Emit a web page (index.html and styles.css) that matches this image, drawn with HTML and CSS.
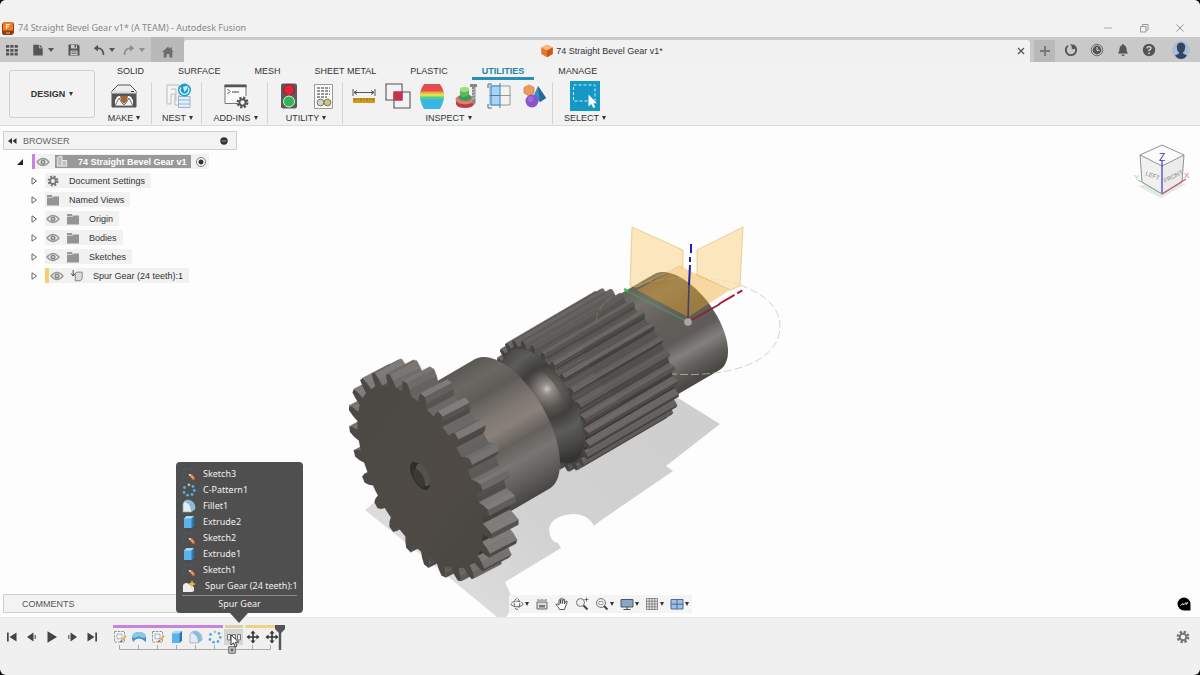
FILE: index.html
```html
<!DOCTYPE html>
<html lang="en">
<head>
<meta charset="utf-8">
<title>74 Straight Bevel Gear v1* (A TEAM) - Autodesk Fusion</title>
<link rel="stylesheet" href="styles.css">
</head>
<body>
<svg class="defs" width="0" height="0" aria-hidden="true">
  <symbol id="eye" viewBox="0 0 14 10"><path d="M1 5Q7-2 13 5Q7 12 1 5Z" fill="none" stroke="#9a9a9a" stroke-width="1.4"/><circle cx="7" cy="5" r="2.6" fill="#8c8c8c"/><circle cx="7" cy="5" r=".9" fill="#ddd"/></symbol>
  <symbol id="folder" viewBox="0 0 14 12"><path d="M1 1H6V2.400H13V11.500H1Z" fill="#949494"/><path d="M1 3.400H6.500L7.500 2.600" stroke="#e4e4e4" fill="none" stroke-width=".8"/></symbol>
  <symbol id="tri" viewBox="0 0 8 8"><path d="M2 .8L6.500 4L2 7.200Z" fill="#fff" stroke="#555" stroke-width=".9"/></symbol>
  <symbol id="cog" viewBox="0 0 14 14"><circle cx="7" cy="7" r="5" fill="none" stroke="currentColor" stroke-width="2.800" stroke-dasharray="2.300 1.627"/><circle cx="7" cy="7" r="3.300" fill="none" stroke="currentColor" stroke-width="2"/></symbol>
  <symbol id="sketch" viewBox="0 0 14 14"><rect x="1.500" y="1.500" width="10" height="10.500" fill="#f5f8fa" stroke="#74808a" stroke-width=".8" stroke-dasharray="2.500 1"/><path d="M4 4H9V8.500L4 9Z" fill="none" stroke="#93a0aa" stroke-width=".8"/><path d="M7 12.500L8 10L12.500 5L13.700 6.200L9.200 11.200Z" fill="#eda64d"/><path d="M7 12.500L8 10.300L9 11.300Z" fill="#333"/></symbol>
  <symbol id="sketchd" viewBox="0 0 14 14"><path d="M2 2H10M2 2V11H6M10 2V6" fill="none" stroke="#47647e" stroke-width="1" stroke-dasharray="2 1.500"/><path d="M7 8L10 7.500L13 11L11 13Z" fill="#ea9347"/><path d="M6.500 7L9 7.300L8 9.600Z" fill="#f6e6cf"/><path d="M11 12.600L13 11L13.500 12.500L12 13.500Z" fill="#d8434a"/></symbol>
  <symbol id="box" viewBox="0 0 14 14"><path d="M2 3.500L4.500 1H12V10.500L9.500 13H2Z" fill="#5ab4ea"/><path d="M2 3.500L4.500 1H12L9.500 3.500Z" fill="#a2dafa"/><path d="M9.500 3.500L12 1V10.500L9.500 13Z" fill="#2678b4"/></symbol>
  <symbol id="pattern" viewBox="0 0 14 14"><g fill="#5aaed8"><circle cx="7" cy="1.800" r="1.400" fill="#9cc"/><circle cx="11" cy="3.500" r="1.400"/><circle cx="12.300" cy="7.500" r="1.400"/><circle cx="10" cy="11.500" r="1.400"/><circle cx="5.500" cy="12.200" r="1.400"/><circle cx="2" cy="9.500" r="1.400"/><circle cx="2.500" cy="4.500" r="1.400"/></g></symbol>
  <symbol id="fillet" viewBox="0 0 14 14"><path d="M1 13V5Q2 1 6 1Q13 2 13 9V10L9 13Z" fill="#e5ecf0" stroke="#9aa4ab" stroke-width=".7"/><path d="M5 1Q13 2 13 10L9 13Q9 5 3 3Z" fill="#84bddf"/></symbol>
  <symbol id="move" viewBox="0 0 14 14"><path d="M7 .5L9.500 3.500H7.800V6.200H10.500V4.500L13.500 7L10.500 9.500V7.800H7.800V10.500H9.500L7 13.500L4.500 10.500H6.200V7.800H3.500V9.500L.5 7L3.500 4.500V6.200H6.200V3.500H4.500Z" fill="#333"/></symbol>
</svg>

<div class="app">
  <header class="titlebar">
    <svg class="logo" viewBox="0 0 12 14"><path d="M0 3L2 1H11L12 3V12L10 14H1L0 12Z" fill="#8b3f14"/><path d="M1 2.500L2.500 1H11V9.500H1Z" fill="#f47b20"/><path d="M4.500 8V3.500H8M4.500 5.500H7" stroke="#fff" fill="none" stroke-width="1.100"/><path d="M4 12H8" stroke="#f5b07a"/></svg>
    <span class="title">74 Straight Bevel Gear v1* (A TEAM) - Autodesk Fusion</span>
    <div class="winbtns">
      <button aria-label="Minimize"><svg viewBox="0 0 10 10"><path d="M1 5H9" stroke="#aaa"/></svg></button>
      <button aria-label="Restore"><svg viewBox="0 0 10 10"><path d="M1.500 3.500H7V9H1.500ZM3.500 3V1.500H9V7H7.500" fill="none" stroke="#999"/></svg></button>
      <button aria-label="Close"><svg viewBox="0 0 10 10"><path d="M1.500 1.500L8.500 8.500M8.500 1.500L1.500 8.500" stroke="#888" stroke-width=".9"/></svg></button>
    </div>
  </header>

  <nav class="tabbar">
    <div class="quick">
      <button class="q-grid" aria-label="Data panel"><svg viewBox="0 0 12 12" fill="#555"><path d="M0 1H3.200V3.800H0ZM4.300 1H7.500V3.800H4.300ZM8.600 1H11.800V3.800H8.600ZM0 4.900H3.200V7.700H0ZM4.300 4.900H7.500V7.700H4.300ZM8.600 4.900H11.800V7.700H8.600ZM0 8.800H3.200V11.600H0ZM4.300 8.800H7.500V11.600H4.300ZM8.600 8.800H11.800V11.600H8.600Z"/></svg></button>
      <button class="q-file" aria-label="File"><svg viewBox="0 0 12 14" fill="#555"><path d="M.5 1H7V5H11.500V13.500H.5Z"/><path d="M8 1L11.500 4.200H8Z"/></svg><i class="caret"></i></button>
      <button class="q-save" aria-label="Save"><svg viewBox="0 0 12 12"><path d="M.5.500H10L11.500 2V11.500H.5Z" fill="#555"/><path d="M3 1H9V4.500H3Z" fill="#ccc"/><path d="M6.500 1H8V3.500H6.500Z" fill="#555"/><path d="M2.500 6.500H9.500V11H2.500Z" fill="#ccc"/><path d="M3.500 7.800H8.500M3.500 9.500H8.500" stroke="#666" stroke-width=".8"/></svg></button>
      <button class="q-undo" aria-label="Undo"><svg viewBox="0 0 12 12"><path d="M5 .8L.8 4.300L5 7.500Z" fill="#555"/><path d="M4 4.200Q10.500 4 10.500 11" fill="none" stroke="#555" stroke-width="1.700"/></svg><i class="caret"></i></button>
      <button class="q-redo" aria-label="Redo"><svg viewBox="0 0 12 12"><path d="M7 .8L11.200 4.300L7 7.500Z" fill="#8e8e8e"/><path d="M8 4.200Q1.500 4 1.500 11" fill="none" stroke="#8e8e8e" stroke-width="1.700"/></svg><i class="caret dim"></i></button>
      <button class="q-home" aria-label="Home"><svg viewBox="0 0 12 12"><path d="M6 .8L8.500 3V1.500H10V4.400L11.800 6H10.300V11.500H7.300V8H4.700V11.500H1.700V6H.2Z" fill="#6d6d6d"/></svg></button>
    </div>
    <div class="doc">
      <span class="docname"><svg viewBox="0 0 12 14"><path d="M6 .8L11.700 3.500V10L6 13.300L.3 10V3.500Z" fill="#e8762c"/><path d="M6 .8L11.700 3.500L6 6.500L.3 3.500Z" fill="#f9b77c"/><path d="M6 6.500L11.700 3.500V10L6 13.300Z" fill="#c9581a"/></svg>74 Straight Bevel Gear v1*</span>
      <button class="docclose" aria-label="Close tab"><svg viewBox="0 0 10 10"><path d="M2 2L8 8M8 2L2 8" stroke="#555" stroke-width="1.300"/></svg></button>
    </div>
    <div class="right">
      <button class="plus" aria-label="New tab"><svg viewBox="0 0 12 12"><path d="M6 1V11M1 6H11" stroke="#777" stroke-width="1.800"/></svg></button>
      <button aria-label="Extensions"><svg viewBox="0 0 14 14"><path d="M4 2.700A5.200 5.200 0 1 0 9.500 2.400" fill="none" stroke="#555" stroke-width="1.900"/><path d="M6 1L10.500 2L9.800 3.600L12 4.500L9.500 6.500L7.500 5.500L7.800 3.500Z" fill="#555"/></svg></button>
      <button aria-label="Job status"><svg viewBox="0 0 14 14"><circle cx="7" cy="7" r="5.800" fill="none" stroke="#666" stroke-width=".9"/><circle cx="7" cy="7" r="4.400" fill="#555"/><path d="M7 4V7.300H9.500" fill="none" stroke="#ddd"/></svg></button>
      <button aria-label="Notifications"><svg viewBox="0 0 14 14"><path d="M7 1Q8 1 8 2.200Q10.600 3 10.600 7Q10.800 9 12.300 10.600H1.700Q3.200 9 3.400 7Q3.400 3 6 2.200Q6 1 7 1ZM5.300 11.400H8.700Q8.300 13 7 13T5.300 11.400Z" fill="#555"/></svg></button>
      <button aria-label="Help"><svg viewBox="0 0 14 14"><circle cx="7" cy="7" r="6.200" fill="#555"/><path d="M5 5.500Q5 3.600 7 3.600T9 5.300Q9 6.400 7 7.200V8.300" fill="none" stroke="#ddd" stroke-width="1.300"/><circle cx="7" cy="10.300" r=".9" fill="#ddd"/></svg></button>
      <button class="avatar" aria-label="Account"><svg viewBox="0 0 18 18"><circle cx="9" cy="9" r="9" fill="#a9bfd6"/><path d="M9 1.500Q13.500 2 13.200 6.500Q13 10 11 11.500V12.500L15 14.500Q12.500 18 9 18T3 14.500L7 12.500V11.500Q5 10 4.800 6.500Q4.500 2 9 1.500Z" fill="#34465f"/></svg></button>
    </div>
  </nav>

  <section class="ribbon">
    <button class="design">DESIGN <i class="caret small"></i></button>
    <div class="ribbonmain">
      <div class="modes" role="tablist">
        <button role="tab">SOLID</button><button role="tab">SURFACE</button><button role="tab">MESH</button><button role="tab">SHEET METAL</button><button role="tab">PLASTIC</button><button role="tab" class="on" aria-selected="true">UTILITIES</button><button role="tab">MANAGE</button>
      </div>
      <div class="groups">
        <div class="group g-make"><div class="icons">
          <svg viewBox="0 0 28 28"><path d="M2 9L8 3H20L26 9V25H2Z" fill="#eee" stroke="#555" stroke-width="1"/><path d="M2 9H26V25H2Z" fill="#555"/><path d="M2 9H26V11.500H2Z" fill="#ddd"/><path d="M5 24Q5 14 9 14H19Q23 14 23 24Z" fill="#fff"/><path d="M10 14H18L17 19L14 22L11 19Z" fill="#a5643a"/><path d="M5 24V18L9 16L14 24Z M14 24L19 16L23 18V24Z" fill="#f4f2ef"/><path d="M9 16L12 21L14 23L16 21L19 16L23 24H5Z" fill="none" stroke="#555" stroke-width=".8"/><path d="M21 9.500H24" stroke="#333"/></svg>
        </div><button>MAKE <i class="caret small"></i></button></div>
        <div class="group g-nest"><div class="icons">
          <svg viewBox="0 0 28 28"><path d="M3 3H15V23H11V12H7V22H3ZM7 7H12V19" fill="#f5f5f5" stroke="#bbb" stroke-width="1"/><path d="M14.500 14.500H26V25.500H14.500ZM14.500 18H26M14.500 22H26" fill="#e4eef8" stroke="#9ab4d0"/><circle cx="20.500" cy="8" r="6.500" fill="#1c9cc9"/><path d="M17 5.500A4.300 4.300 0 1 0 24 5.500" fill="none" stroke="#e8f6fb" stroke-width="1.200"/><path d="M19 5L24 3.500L22.500 8L20.500 10Z" fill="#d6f0f9"/></svg>
        </div><button>NEST <i class="caret small"></i></button></div>
        <div class="group g-add"><div class="icons">
          <svg viewBox="0 0 28 28"><path d="M16 21.500H3V3H24V14" fill="#fafafa" stroke="#777"/><path d="M2.500 4H24.500" stroke="#555" stroke-width="2.500"/><path d="M5.500 7L8 9.500L5.500 12M10 10H17" fill="none" stroke="#444"/><svg x="14" y="14" width="13" height="13" color="#555"><use href="#cog"/></svg></svg>
        </div><button>ADD-INS <i class="caret small"></i></button></div>
        <div class="group g-util"><div class="icons">
          <svg viewBox="0 0 28 28"><rect x="6" y="1.500" width="16" height="25" rx="2" fill="#5b5b5b"/><circle cx="14" cy="8" r="5.500" fill="#dd2338" stroke="#8d1f2b"/><circle cx="14" cy="19.500" r="5.500" fill="#32b557" stroke="#d8f0dc"/></svg>
          <svg viewBox="0 0 28 28"><path d="M5.500 2.500H23.500V26.500H5.500Z" fill="#fafafa" stroke="#999"/><path d="M8 6H21M8 9H21M8 12H21M8 15H18" stroke="#777" stroke-width="1.300" stroke-dasharray="3 1"/><circle cx="11.500" cy="20.500" r="3.400" fill="#d8d2c4" stroke="#777"/><circle cx="18.500" cy="20.500" r="3.400" fill="#d6c46c" stroke="#777"/></svg>
        </div><button>UTILITY <i class="caret small"></i></button></div>
        <div class="group g-insp"><div class="icons">
          <svg viewBox="0 0 28 28"><path d="M3 7V14M25 7V14M4 10.500H24M7 8.500L4 10.500L7 12.500M21 8.500L24 10.500L21 12.500" fill="none" stroke="#555"/><path d="M3 16H25V21H3Z" fill="#d09a1c"/><path d="M5 16V19M8 16V18M11 16V19M14 16V18M17 16V19M20 16V18M23 16V19" stroke="#8b651a" stroke-width=".8"/></svg>
          <svg viewBox="0 0 28 28"><path d="M2 2H18V18H2Z" fill="none" stroke="#555" stroke-width="1.100"/><path d="M10 10H26V26H10Z" fill="none" stroke="#555" stroke-width="1.100"/><path d="M9.500 9.500H18.500V18.500H9.500Z" fill="#c9304a"/></svg>
          <svg viewBox="0 0 28 28"><clipPath id="zb"><path d="M6 2H22Q26 8 26 14T22 27H6Q2 20 2 14T6 2Z"/></clipPath><g clip-path="url(#zb)"><path d="M0 0H28V11H0Z" fill="#e04e50"/><path d="M0 9.500H28V13H0Z" fill="#f2a33c"/><path d="M0 11.500H28V15H0Z" fill="#d9e54c"/><path d="M0 14.500H28V18H0Z" fill="#4dd08a"/><path d="M0 17H28V28H0Z" fill="#3bb6e0"/></g></svg>
          <svg viewBox="0 0 28 28"><path d="M4 17V22Q5 26 13 26T22 22V17Z" fill="#b83f44"/><ellipse cx="13" cy="17.500" rx="9.500" ry="4.800" fill="#e47a75"/><ellipse cx="13" cy="15.500" rx="6.500" ry="3.500" fill="#3e9b52"/><path d="M8 7V13Q10 17 17 13V7Z" fill="#59b95c"/><ellipse cx="12.500" cy="7.500" rx="4.700" ry="2.400" fill="#9fe07d"/><path d="M18 2H25V5H23.500V21L22 23L20 21V5H18Z" fill="#888"/><path d="M20 8L23.500 6.500M20 11L23.500 9.500M20 14L23.500 12.500M20 17L23.500 15.500" stroke="#ccc"/></svg>
          <svg viewBox="0 0 28 28"><path d="M3 3H14V24H3Z" fill="#a9d4f5"/><path d="M14 4H24V23H14M3 13.500H25" fill="none" stroke="#999"/><path d="M5 4V23M14 1V26M5 4H14M5 23H14M5 13.500H14" fill="none" stroke="#4b80a8"/><path d="M2 6V2H6M2 22V26H6" fill="none" stroke="#567"/></svg>
          <svg viewBox="0 0 28 28"><path d="M9 3L14 5.500V11L9 14L4 11V5.500Z" fill="#ee9a5c" stroke="#cf7b40" stroke-width=".7"/><path d="M18 4L26 16L20 20L13 15Z" fill="#3a8ac4"/><path d="M18 4L26 16L20 20Z" fill="#276696"/><circle cx="12" cy="19" r="6.500" fill="#8a55cc"/><circle cx="10.500" cy="17" r="3" fill="#a87be0" opacity=".6"/></svg>
        </div><button>INSPECT <i class="caret small"></i></button></div>
        <div class="group g-sel"><div class="icons">
          <svg class="selicon" viewBox="0 0 30 30"><path d="M0 0H30V30H0Z" fill="#1499c6"/><path d="M3.500 4H25V20H3.500Z" fill="none" stroke="#c9ecf7" stroke-dasharray="3 2"/><path d="M18.500 13.500V25.500L21.300 23L23.300 27L25.300 26L23.500 22.200H27Z" fill="#fff"/></svg>
        </div><button>SELECT <i class="caret small"></i></button></div>
      </div>
    </div>
  </section>

  <main class="canvas">
    <svg class="scene" viewBox="0 126 1200 491" role="img" aria-label="Gear shaft model">
      <defs>
        <linearGradient id="hubg" gradientUnits="userSpaceOnUse" x1="475" y1="359" x2="549" y2="489">
          <stop offset="0" stop-color="#5a5854"/><stop offset=".12" stop-color="#6b6863"/><stop offset=".24" stop-color="#5f5c58"/><stop offset=".4" stop-color="#7f7973"/><stop offset=".5" stop-color="#898179"/><stop offset=".62" stop-color="#64615d"/><stop offset=".74" stop-color="#777672"/><stop offset=".86" stop-color="#62615d"/><stop offset="1" stop-color="#474643"/>
        </linearGradient>
        <linearGradient id="shaftg" gradientUnits="userSpaceOnUse" x1="661" y1="274" x2="715" y2="369">
          <stop offset="0" stop-color="#66645f"/><stop offset=".15" stop-color="#74716b"/><stop offset=".4" stop-color="#615e5a"/><stop offset=".6" stop-color="#5e5c59"/><stop offset=".74" stop-color="#82807d"/><stop offset=".88" stop-color="#5f5d5a"/><stop offset="1" stop-color="#4a4946"/>
        </linearGradient>
        <radialGradient id="dish" gradientUnits="userSpaceOnUse" cx="548" cy="392" r="70">
          <stop offset="0" stop-color="#77726d"/><stop offset=".2" stop-color="#5d5a56"/><stop offset=".38" stop-color="#403f3d"/><stop offset=".6" stop-color="#5c5c59"/><stop offset=".85" stop-color="#454543"/><stop offset="1" stop-color="#333330"/>
        </radialGradient>
        <radialGradient id="glint" gradientUnits="userSpaceOnUse" cx="547" cy="389" r="20">
          <stop offset="0" stop-color="#cdc6c0"/><stop offset=".25" stop-color="#958e88"/><stop offset="1" stop-color="#6c6762" stop-opacity="0"/>
        </radialGradient>
        <linearGradient id="facebig" x1="0" y1="0" x2="1" y2="1"><stop offset="0" stop-color="#4b4945"/><stop offset=".6" stop-color="#4f4a46"/><stop offset="1" stop-color="#464640"/></linearGradient>
        <linearGradient id="shadow" gradientUnits="userSpaceOnUse" x1="480" y1="610" x2="640" y2="430"><stop offset="0" stop-color="#dcdcdc"/><stop offset=".4" stop-color="#d2d2d2"/><stop offset="1" stop-color="#cfcfcf"/></linearGradient>
      </defs>
      <path d="M365 510L392 488L520 460L678 398L720 424L666 466L673 471L600 521L594 526Q588 514 573 514Q550 516 549 530Q550 542 558 543L561 548L505 582L515 604L506 617H497L440 570Z" fill="url(#shadow)"/>
      <g id="model"></g>
      <path d="M632 227L683 250V268L680 266L637 287L630 286Z" fill="#f5b942" fill-opacity=".34" stroke="#dfb76a" stroke-width=".6"/>
      <path d="M697 250L743 227L740 286L731 290L697 275Z" fill="#f5b942" fill-opacity=".34" stroke="#dfb76a" stroke-width=".6"/>
      <path d="M680 266L730 290L688 317L637 290Z" fill="#eda51f" fill-opacity=".42"/>
      <path d="M740 285Q780 300 780 326C780 360 735 378 672 374" fill="none" stroke="#c9c3a8" stroke-width=".9" stroke-dasharray="8 3" stroke-opacity=".8"/>
      <path d="M740 285C700 270 596 276 596 324" fill="none" stroke="#c9c3a8" stroke-width=".9" stroke-dasharray="8 3" stroke-opacity=".3"/>
      <path d="M625 290L688 322" stroke="#4f9a62" stroke-width="1.500" stroke-opacity=".6"/><path d="M624 289L628 291" stroke="#31c552" stroke-width="2"/>
      <path d="M688 322L720 304" stroke="#8b2130" stroke-width="1.500"/><path d="M719 304L743 290" stroke="#b01730" stroke-width="2" stroke-dasharray="18 3 6"/>
      <path d="M691 244V253M690 257V262M690 265L689 285" stroke="#2220a8" stroke-width="2"/><path d="M689 285L688 319" stroke="#454068" stroke-width="1.600"/>
      <circle cx="688" cy="322" r="3.800" fill="#aaa7a3"/>
    </svg>

    <aside class="browser">
      <div class="panelhead"><svg viewBox="0 0 10 8"><path d="M5 1V7L1 4ZM9.500 1V7L5.500 4Z" fill="#333"/></svg><span>BROWSER</span><svg class="dot" viewBox="0 0 10 10"><circle cx="5" cy="5" r="3.700" fill="#333"/><path d="M3 5H7" stroke="#999"/></svg></div>
      <ul class="tree">
        <li class="root"><svg class="tw" viewBox="0 0 8 8"><path d="M7 1V7H1Z" fill="#222"/></svg>
          <div class="chip bar purple"><svg class="eye"><use href="#eye"/></svg><span class="sel"><svg class="part" viewBox="0 0 14 14"><path d="M2 12V3L4 1.500H7V6H12V12Z" fill="#bfbfbf" stroke="#f5f5f5" stroke-width=".9"/><path d="M7 6V12" stroke="#f5f5f5"/></svg>74 Straight Bevel Gear v1</span><input type="radio" checked aria-label="Activate component"></div></li>
        <li><svg class="tw"><use href="#tri"/></svg><div class="chip"><svg class="ic gray"><use href="#cog"/></svg><span>Document Settings</span></div></li>
        <li><svg class="tw"><use href="#tri"/></svg><div class="chip"><svg class="ic"><use href="#folder"/></svg><span>Named Views</span></div></li>
        <li><svg class="tw"><use href="#tri"/></svg><div class="chip"><svg class="eye"><use href="#eye"/></svg><svg class="ic"><use href="#folder"/></svg><span>Origin</span></div></li>
        <li><svg class="tw"><use href="#tri"/></svg><div class="chip"><svg class="eye"><use href="#eye"/></svg><svg class="ic"><use href="#folder"/></svg><span>Bodies</span></div></li>
        <li><svg class="tw"><use href="#tri"/></svg><div class="chip"><svg class="eye"><use href="#eye"/></svg><svg class="ic"><use href="#folder"/></svg><span>Sketches</span></div></li>
        <li><svg class="tw"><use href="#tri"/></svg><div class="chip bar yellow"><svg class="eye"><use href="#eye"/></svg><svg class="ic" viewBox="0 0 14 14"><path d="M5 4L7 2.500H13V10L11 12.500H5Z" fill="#ddd" stroke="#777"/><path d="M2.500 0V7M0 4L2.500 7L5 4" fill="none" stroke="#444" stroke-width="1.100"/></svg><span>Spur Gear (24 teeth):1</span></div></li>
      </ul>
    </aside>

    <svg class="cube" viewBox="0 0 60 60"><path d="M7 45L30 57L55 43L32 40Z" fill="#bbb" opacity=".35"/><path d="M9 14L31 4L53 14L31 25Z" fill="#fbfbfb"/><path d="M9 14L31 25V53L11 41Z" fill="#f0f0f0"/><path d="M31 25L53 14L51 41L31 53Z" fill="#ebebeb"/><path d="M9 14L31 4L53 14L51 41L31 53L11 41ZM9 14L31 25L53 14" fill="none" stroke="#777" stroke-width=".8"/><path d="M31 53L7 39" stroke="#7cc487"/><path d="M31 53L55 38" stroke="#c95c68" stroke-width="1.200"/><path d="M31 52V20" stroke="#3c36c4" stroke-width="1.200"/><text x="14" y="34" transform="rotate(20 14 34)">LEFT</text><text x="34" y="42" transform="rotate(-27 34 42)">FRONT</text><text class="z" x="28" y="20">Z</text><text class="x" x="53" y="37">X</text><text class="y" x="3" y="39">Y</text></svg>

    <div class="bottom">
      <div class="panelhead comments">COMMENTS</div>
      <div class="navbar">
        <button aria-label="Orbit"><svg viewBox="0 0 14 14"><ellipse cx="7" cy="7" rx="6" ry="2.700" fill="none" stroke="#666" stroke-dasharray="4 1"/><ellipse cx="7" cy="7" rx="2.700" ry="5.500" fill="none" stroke="#666" stroke-dasharray="4 1"/></svg><i class="caret small"></i></button>
        <button aria-label="Look at"><svg viewBox="0 0 14 14"><path d="M2 5H12V12H2ZM3 4V2M5 4V2.500M7 4V2M9 4V2.500M11 4V2" fill="#ddd" stroke="#666"/><path d="M4 8H10V10.500H4Z" fill="#777"/></svg></button>
        <button aria-label="Pan"><svg viewBox="0 0 14 14"><path d="M4.500 12.500Q3 9 .8 7.500Q1.500 6 4 8V3Q4.500 2 5.300 3V6.500L5.800 1.500Q6.500.7 7.200 1.500V6.500L8.500 2Q9.500 1.600 9.700 2.500L9.300 7L11.300 4Q12.400 3.900 12.200 5L10.300 10L9.500 12.500Z" fill="#fff" stroke="#444" stroke-width=".9"/></svg></button>
        <button aria-label="Zoom"><svg viewBox="0 0 14 14"><circle cx="5.500" cy="5.500" r="4" fill="#eee" stroke="#777"/><path d="M8.500 8.500L12.500 12.500" stroke="#444" stroke-width="2"/><path d="M11.500.5V4.500M9.500 2.500H13.500" stroke="#555" stroke-width=".8"/></svg></button>
        <button aria-label="Fit"><svg viewBox="0 0 14 14"><circle cx="6" cy="6" r="4.500" fill="#eee" stroke="#777"/><path d="M4 4.500H8V7.500H4Z" fill="#fff" stroke="#888" stroke-width=".7"/><path d="M9 9L12.500 12.500" stroke="#444" stroke-width="2"/></svg><i class="caret small"></i></button>
        <button aria-label="Display"><svg viewBox="0 0 14 14"><path d="M1 2.500H13V10H1Z" fill="#88a5ca" stroke="#555"/><path d="M7 10V12M3.500 12.500H10.500" stroke="#555" stroke-width="1.200"/></svg><i class="caret small"></i></button>
        <button aria-label="Grid"><svg viewBox="0 0 14 14"><path d="M1.500 1.500H12.500V12.500H1.500ZM4.200 1V13M7 1V13M9.800 1V13M1 4.200H13M1 7H13M1 9.800H13" fill="#e6e6e6" stroke="#777" stroke-width=".8"/></svg><i class="caret small"></i></button>
        <button aria-label="Viewports"><svg viewBox="0 0 14 14"><path d="M1 2.500H13V12H1ZM7 2.500V12M1 7.200H13" fill="#9fbfe8" stroke="#4d6a92"/></svg><i class="caret small"></i></button>
      </div>
      <button class="chat" aria-label="Assistant"><svg viewBox="0 0 14 14"><path d="M7 .5A6.500 6.500 0 0 1 13.500 7V13.500H7A6.500 6.500 0 0 1 7 .5Z" fill="#000"/><path d="M3.500 8.500L6 6.500L6.500 8L9 5.500L9.300 7.500L11 5" fill="none" stroke="#fff" stroke-width=".9"/></svg></button>
    </div>
  </main>

  <footer class="timeline">
    <div class="play">
      <button aria-label="To start"><svg viewBox="0 0 12 12"><path d="M1 1.500H2.700V10.500H1ZM10.500 1.500V10.500L3.500 6Z" fill="#444"/></svg></button>
      <button aria-label="Step back"><svg viewBox="0 0 12 12"><path d="M7.500 1.500V10.500L1 6Z" fill="#444"/><path d="M8.500 4H10V8H8.500Z" fill="#777"/></svg></button>
      <button aria-label="Play"><svg viewBox="0 0 12 12"><path d="M1.500.3V11.700L11 6Z" fill="#444"/></svg></button>
      <button aria-label="Step forward"><svg viewBox="0 0 12 12"><path d="M4.500 1.500V10.500L11 6Z" fill="#444"/><path d="M2 4H3.500V8H2Z" fill="#777"/></svg></button>
      <button aria-label="To end"><svg viewBox="0 0 12 12"><path d="M9.300 1.500H11V10.500H9.300ZM1.500 1.500V10.500L8.500 6Z" fill="#444"/></svg></button>
    </div>
    <div class="track">
      <div class="bars"><i class="b1"></i><i class="b2"></i><i class="b3"></i></div>
      <ol class="ops">
        <li><svg><use href="#sketch"/></svg></li>
        <li><svg viewBox="0 0 14 14"><path d="M0 8Q0 2 7 2T14 8V12L10.500 9.500Q7 7.500 3.500 9.500L1 12Z" fill="#3e92cc"/><path d="M0 7Q1 2 7 2T14 7L11 8Q7 5 3 8Z" fill="#8cc8ec"/></svg></li>
        <li><svg><use href="#sketch"/></svg></li>
        <li><svg><use href="#box"/></svg></li>
        <li><svg><use href="#fillet"/></svg></li>
        <li><svg><use href="#pattern"/></svg></li>
        <li class="hover"><svg viewBox="0 0 14 14"><path d="M.5 4.500H3.500V10H.5ZM5.500 4.500H8.500V10H5.500ZM10.500 4.500H13.500V10H10.500Z" fill="#e8e8e8" stroke="#777"/></svg>
          <svg class="expand" viewBox="0 0 8 8"><path d="M.8.800H7.200V7.200H.8Z" fill="#ddd" stroke="#555"/><path d="M4 2V6M2 4H6" stroke="#444"/></svg>
          <svg class="cursor" viewBox="0 0 10 14"><path d="M1 .8V11L3.500 8.800L5.300 12.800L7 12L5.300 8.200H8.700Z" fill="#fff" stroke="#222" stroke-width=".9"/></svg>
          <div class="tip" role="tooltip">
            <ul>
              <li><svg><use href="#sketchd"/></svg>Sketch3</li>
              <li><svg><use href="#pattern"/></svg>C-Pattern1</li>
              <li><svg><use href="#fillet"/></svg>Fillet1</li>
              <li><svg><use href="#box"/></svg>Extrude2</li>
              <li><svg><use href="#sketchd"/></svg>Sketch2</li>
              <li><svg><use href="#box"/></svg>Extrude1</li>
              <li><svg><use href="#sketchd"/></svg>Sketch1</li>
              <li><svg viewBox="0 0 14 14"><path d="M1 13V7Q1 4 5 4L12 8V12L10 13Z" fill="#eee"/><path d="M10 1L11.200 3.800L14 5L11.200 6.200L10 9L8.800 6.200L6 5L8.800 3.800Z" fill="#e8b23c"/></svg><span class="in">Spur Gear (24 teeth):1</span></li>
            </ul>
            <p>Spur Gear</p>
          </div>
        </li>
        <li><svg><use href="#move"/></svg></li>
        <li><svg><use href="#move"/></svg></li>
      </ol>
      <svg class="ruler" viewBox="0 0 175 8"><path d="M9.500 0V4.500H160.500V0M28.500 0V4M47.500 0V4M66.500 0V4M85.500 0V4M104.500 0V4M142.500 0V4" fill="none" stroke="#aaa"/></svg>
      <svg class="marker" viewBox="0 0 10 26"><path d="M0 0H10V4L6.200 8V25H3.800V8L0 4Z" fill="#555"/></svg>
    </div>
    <button class="settings" aria-label="Timeline settings"><svg><use href="#cog"/></svg></button>
  </footer>
</div>
<script src="scene.js"></script>
</body>
</html>
```
FILE: styles.css
```css
* { box-sizing: border-box; }
html, body { height: 100%; }
body { margin: 0; background: #000; font: 9px/12px "Liberation Sans", Arial, sans-serif; color: #333; }
button { border: 0; background: none; padding: 0; margin: 0; font: inherit; color: inherit; display: flex; align-items: center; justify-content: center; }
ul, ol { list-style: none; margin: 0; padding: 0; }
svg { display: block; flex: none; }
.defs { position: absolute; }
.app { min-height: 100vh; display: grid; grid-template-rows: 37px 25px 64px 1fr 58px; background: #f0f0f0; border-radius: 6px; overflow: hidden; }
.caret { width: 0; height: 0; border: 3px solid transparent; border-top: 4px solid #555; border-bottom: 0; }
.caret.small { border-width: 2px; border-top: 4px solid #333; border-bottom: 0; }
.caret.dim { border-top-color: #8e8e8e; }

.titlebar { display: flex; align-items: flex-end; padding: 0 10px 2px 2px; background: #f2f2f2; }
.logo { width: 12px; height: 14px; }
.title { flex: 1; margin-left: 4px; font: 9px/14px "Noto Sans", sans-serif; color: #888; }
.winbtns { display: flex; gap: 26px; padding: 0 5px 2px 0; }
.winbtns svg { width: 10px; height: 10px; }

.tabbar { display: flex; background: #c9c9c9; }
.quick { display: flex; align-items: center; width: 184px; padding-left: 6px; }
.quick svg { width: 12px; height: 12px; }
.quick button { height: 25px; gap: 4px; }
.q-file { margin-left: 14px; }
.q-save { margin-left: 14px; }
.q-undo { margin-left: 13px; }
.q-redo { margin-left: 8px; }
.quick .q-home { width: 33px; margin-left: auto; padding-top: 5px; background: #b9b9b9; }
.doc { flex: 1; display: flex; align-items: center; margin-top: 3px; background: #f1f1f1; border-radius: 3px 3px 0 0; }
.docname { flex: 1; display: flex; align-items: center; justify-content: center; gap: 3px; padding-left: 8px; }
.docname svg { width: 12px; height: 14px; }
.docclose { width: 18px; }
.docclose svg { width: 10px; height: 10px; }
.right { display: flex; align-items: center; gap: 12px; padding: 0 10px 0 4px; }
.right svg { width: 14px; height: 14px; }
.right .plus { width: 21px; height: 22px; margin: 3px -3px 0 0; background: #b9b9b9; }
.right .plus svg { width: 12px; height: 12px; }
.avatar { margin-left: 4px; }
.right .avatar svg { width: 18px; height: 18px; }

.ribbon { display: flex; padding-left: 9px; background: #f2f2f2; border-bottom: 1px solid #dcdcdc; }
.design { width: 86px; height: 48px; margin-top: 8px; gap: 4px; border: 1px solid #cfcfcf; border-radius: 3px; font-weight: bold; }
.ribbonmain { flex: 1; }
.modes { display: flex; gap: 14px; padding-left: 12px; }
.modes button { height: 18px; padding: 2px 10px 0; border-bottom: 3px solid transparent; white-space: nowrap; }
.modes .on { color: #2382a5; border-bottom-color: #2591b7; font-weight: bold; }
.groups { display: flex; }
.group { display: flex; flex-direction: column; align-items: center; height: 42px; margin-top: 2px; padding: 0 4px 0 6px; border-right: 1px solid #d4d4d4; }
.group > button { gap: 3px; height: 14px; margin-top: 1px; white-space: nowrap; }
.icons { display: flex; gap: 6px; height: 28px; align-items: center; }
.icons > svg { width: 28px; height: 28px; }
.icons .selicon { width: 30px; height: 30px; }
.g-make { width: 57px; }
.g-nest { width: 50px; }
.g-add { width: 66px; }
.g-util { width: 75px; }
.g-insp { width: 210px; }
.g-sel { width: 62px; border-right: 0; }

.canvas { display: grid; grid-template: 1fr auto / 1fr auto; background: #fdfdfd; }
.scene { grid-area: 1 / 1 / 3 / 3; width: 100%; height: 100%; }
.browser { grid-area: 1 / 1; justify-self: start; width: 237px; padding: 5px 0 0 3px; }
.panelhead { display: flex; align-items: center; gap: 6px; height: 19px; padding: 0 7px 0 3px; background: #f3f3f3; border: 1px solid #cfcfcf; color: #666; }
.panelhead svg { width: 10px; height: 8px; }
.panelhead .dot { width: 10px; height: 10px; margin-left: auto; }
.tree { padding: 2px 0 0 27px; }
.tree li { display: flex; align-items: center; gap: 7px; height: 19px; }
.tree .root { margin-left: -14px; gap: 8px; }
.tw { width: 8px; height: 8px; }
.chip { display: flex; align-items: center; height: 15px; padding: 0 6px 0 1px; background: #f1f1f1; }
.chip span { margin-left: 8px; }
.chip .eye { width: 14px; height: 10px; }
.chip .ic { width: 14px; height: 12px; }
.chip .eye + .ic { margin-left: 6px; }
.chip .ic + span { margin-left: 9px; }
.chip .gray { color: #777; }
.purple { border-left: 3px solid #c983dc; }
.yellow { border-left: 4px solid #f0d070; }
.root .chip { padding-right: 3px; }
.root .chip .sel { display: flex; align-items: center; gap: 9px; height: 13px; margin-left: 5px; padding-right: 4px; background: #999; color: #fff; font-weight: bold; }
.part { width: 14px; height: 13px; }
.chip input { appearance: none; width: 10px; height: 10px; margin: 0 0 0 5px; border: 1px solid #777; border-radius: 50%; background: radial-gradient(circle, #333 0 2px, #fff 3px); }
.cube { grid-area: 1 / 2; width: 60px; height: 60px; margin: 15px 9px 0 0; font: 6px "Liberation Sans", sans-serif; fill: #888; }
.cube .z { fill: #3c36c4; font-size: 10px; }
.cube .x { fill: #d0707c; font-size: 8px; }
.cube .y { fill: #9bd8a4; font-size: 8px; }
.bottom { grid-area: 2 / 1 / 3 / 3; display: grid; grid-template-columns: 1fr auto 1fr; align-items: center; padding: 0 3px 4px; }
.comments { width: 234px; padding-left: 18px; color: #555; }
.navbar { display: flex; align-items: center; gap: 6px; height: 18px; padding: 0 3px 0 1px; background: #f4f4f4; }
.navbar svg { width: 14px; height: 14px; }
.navbar button { gap: 1px; }
.chat { justify-self: end; margin-right: 6px; }
.chat svg { width: 14px; height: 14px; }

.timeline { display: flex; align-items: flex-start; border-top: 1px solid #e6e6e6; }
.play { display: flex; gap: 8px; width: 110px; padding: 13px 0 0 6px; }
.play svg { width: 12px; height: 12px; }
.track { position: relative; width: 175px; padding-top: 7px; }
.bars { display: flex; gap: 2px; height: 3px; padding-left: 3px; }
.bars i { height: 3px; }
.b1 { width: 110px; background: #c983dc; }
.b2 { width: 18px; background: #e0cfa8; }
.b3 { width: 40px; background: #f0d383; }
.ops { display: flex; padding-top: 1px; }
.ops > li { position: relative; display: flex; justify-content: center; align-items: center; width: 19px; height: 16px; }
.ops > li > svg { width: 14px; height: 14px; }
.hover { background: #d5d5d5; }
.ops .expand { position: absolute; left: 4px; top: 17px; width: 8px; height: 8px; }
.ops .cursor { position: absolute; left: 6px; top: 5px; width: 10px; height: 14px; }
.ruler { width: 175px; height: 8px; }
.marker { position: absolute; right: 0; top: 7px; width: 10px; height: 26px; }
.tip { position: absolute; bottom: 32px; left: -48px; width: 127px; padding: 4px 6px 3px; background: #4f4f4f; border-radius: 4px; color: #f0f0f0; font: 9px/12px "Noto Sans", sans-serif; z-index: 2; white-space: nowrap; }
.tip::after { content: ""; position: absolute; top: 100%; left: 54px; border: 9px solid transparent; border-top: 10px solid #4f4f4f; border-bottom: 0; }
.tip ul li { display: grid; grid-template-columns: 14px auto; justify-content: start; align-items: center; column-gap: 7px; height: 16px; }
.tip ul svg { width: 14px; height: 14px; }
.tip .in { padding-left: 2px; }
.tip p { margin: 1px 0 0; padding-top: 2px; border-top: 1px solid #8a8a8a; text-align: center; }
.settings { margin: 12px 10px 0 auto; color: #777; }
.settings svg { width: 14px; height: 14px; }
```
FILE: scene.js
```javascript
// Builds the gear shaft out of cylinders and toothed extrusions along one axis.
const NS = "http://www.w3.org/2000/svg";
const model = document.getElementById("model");
const PHI = 36 * Math.PI / 180;

function polygon(points, fill, stroke) {
  const el = document.createElementNS(NS, "polygon");
  el.setAttribute("points", points.map(p => p[0].toFixed(1) + "," + p[1].toFixed(1)).join(" "));
  el.setAttribute("fill", fill);
  if (stroke) { el.setAttribute("stroke", stroke); el.setAttribute("stroke-width", ".5"); }
  model.appendChild(el);
}

// A point of a tilted disc: t is the angle, k the share of the full radius.
function onDisc(d, t, k = 1) {
  return [d.x + k * d.rx * Math.cos(t), d.y + k * d.ry * Math.sin(t + PHI)];
}

function disc(d, k, fill) {
  const pts = [];
  for (let i = 0; i < 72; i++) pts.push(onDisc(d, i * Math.PI / 36, k));
  polygon(pts, fill);
}

function cylinder(near, far, fill) {
  const a = 0.5 * far.rx + 0.87 * far.ry * Math.sin(PHI);
  const b = 0.87 * far.ry * Math.cos(PHI);
  const edge = Math.atan2(b, a);
  const pts = [];
  for (let i = 0; i <= 36; i++) pts.push(onDisc(far, edge - Math.PI + i * Math.PI / 36));
  for (let i = 0; i <= 36; i++) pts.push(onDisc(near, edge + i * Math.PI / 36));
  polygon(pts, fill);
}

function gear(d, dx, dy, teeth, root, phase, tone, face) {
  const profile = [[-0.5, root], [-0.28, root], [-0.22, (1 + root) / 2], [-0.12, 0.99], [0.12, 0.99], [0.22, (1 + root) / 2], [0.28, root]];
  const pitch = 2 * Math.PI / teeth;
  const ring = [];
  for (let i = 0; i < teeth; i++)
    for (const [o, k] of profile) {
      const t = phase + (i + o) * pitch;
      ring.push({ p: onDisc(d, t, k), u: k * Math.cos(t), v: k * Math.sin(t), k });
    }
  disc({ ...d, x: d.x + dx, y: d.y + dy }, root, "#62605c");
  const sides = [];
  ring.forEach((a, i) => {
    const b = ring[(i + 1) % ring.length];
    const ex = b.p[0] - a.p[0], ey = b.p[1] - a.p[1];
    if (ex * dy - ey * dx > 0) return;
    const n = Math.atan2(-(b.u - a.u), b.v - a.v);
    const light = Math.max(0, Math.cos(n + 1.3)) ** 1.4;
    const shade = a.k === root && b.k === root ? tone.valley : 0;
    const g = Math.round(tone.base + tone.gain * light - shade);
    sides.push({
      z: (a.p[0] + b.p[0]) * 0.87 - (a.p[1] + b.p[1]) * 0.5,
      pts: [a.p, b.p, [b.p[0] + dx, b.p[1] + dy], [a.p[0] + dx, a.p[1] + dy]],
      fill: `rgb(${g},${g - 3},${g - 6})`
    });
  });
  sides.sort((a, b) => a.z - b.z);
  sides.forEach(s => polygon(s.pts, s.fill, s.fill));
  polygon(ring.map(r => r.p), face);
}

const shaftFar = { x: 687, y: 322, rx: 41, ry: 50 };
cylinder({ ...shaftFar, x: 620, y: 361 }, shaftFar, "url(#shaftg)");

const pinion = { x: 543, y: 406, rx: 47, ry: 66 };
gear(pinion, 89, -52, 27, 0.89, -50 * Math.PI / 180, { base: 64, gain: 42, valley: 16 }, "#454340");
disc(pinion, 0.87, "url(#dish)");
disc({ x: 544, y: 393, rx: 19, ry: 24 }, 1, "url(#glint)");

const hubFar = { x: 512, y: 424, rx: 48, ry: 67 };
cylinder({ ...hubFar, x: 440, y: 466 }, hubFar, "url(#hubg)");

const big = { x: 420, y: 477, rx: 72, ry: 105 };
gear(big, 27, -14, 25, 0.87, 99.4 * Math.PI / 180, { base: 74, gain: 54, valley: 20 }, "url(#facebig)");
disc({ x: 420, y: 476, rx: 10, ry: 14 }, 1, "#2f2d2b");
disc({ x: 423, y: 475, rx: 7, ry: 11 }, 1, "#55524e");
disc({ x: 419, y: 478, rx: 6, ry: 9 }, 1, "#3b3937");
```
